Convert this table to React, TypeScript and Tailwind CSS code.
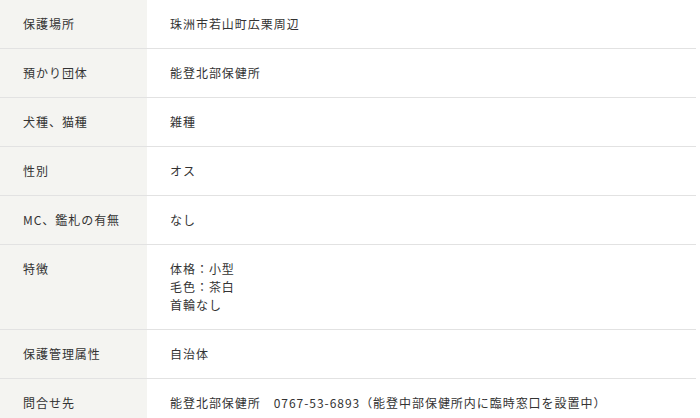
import React from "react"

const rows: { label: string; value: string[] }[] = [
  { label: "保護場所", value: ["珠洲市若山町広栗周辺"] },
  { label: "預かり団体", value: ["能登北部保健所"] },
  { label: "犬種、猫種", value: ["雑種"] },
  { label: "性別", value: ["オス"] },
  { label: "MC、鑑札の有無", value: ["なし"] },
  { label: "特徴", value: ["体格：小型", "毛色：茶白", "首輪なし"] },
  { label: "保護管理属性", value: ["自治体"] },
  { label: "問合せ先", value: ["能登北部保健所　0767-53-6893（能登中部保健所内に臨時窓口を設置中）"] },
]

export default function App() {
  return (
    <div
      className="h-[418px] w-[700px] overflow-hidden bg-white text-[12px] leading-[18px] tracking-[0.08em] text-[#333]"
      style={{ fontFamily: '"Noto Sans CJK JP", "Noto Sans", sans-serif' }}
    >
      <dl className="w-[696px]">
        {rows.map((row, i) => (
          <div
            key={row.label}
            className={`flex ${i < rows.length - 1 ? "border-b border-[#e2e2e2]" : ""}`}
          >
            <dt className="w-[147px] shrink-0 bg-[#f4f4f1] px-[23px] py-[15px]">{row.label}</dt>
            <dd className="flex-1 px-[23px] py-[15px]">
              {row.value.map((v) => (
                <div key={v}>{v}</div>
              ))}
            </dd>
          </div>
        ))}
      </dl>
    </div>
  )
}
